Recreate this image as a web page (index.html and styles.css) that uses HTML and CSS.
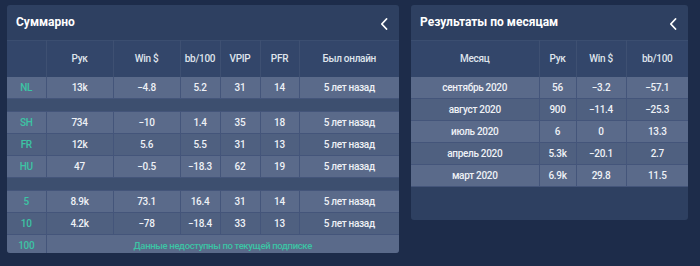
FILE: index.html
```html
<!DOCTYPE html>
<html lang="ru">
<head>
<meta charset="utf-8">
<link rel="stylesheet" href="styles.css">
</head>
<body>
<div class="page">
  <section class="panel panel-left">
    <header class="panel-head">
      <h2 class="panel-title">Суммарно</h2>
      <svg class="chev" viewBox="0 0 8 12" width="8" height="12"><path d="M6.5 1 L1.8 6 L6.5 11" fill="none" stroke="#fff" stroke-width="1.8" stroke-linecap="round" stroke-linejoin="round"/></svg>
    </header>
    <table class="grid">
      <colgroup><col style="width:39px"><col style="width:67px"><col style="width:67px"><col style="width:40px"><col style="width:40px"><col style="width:39px"><col style="width:100px"></colgroup>
      <thead>
        <tr><th></th><th>Рук</th><th>Win $</th><th>bb/100</th><th>VPIP</th><th>PFR</th><th>Был онлайн</th></tr>
      </thead>
      <tbody>
        <tr class="lt"><td class="lbl">NL</td><td>13k</td><td>−4.8</td><td>5.2</td><td>31</td><td>14</td><td>5 лет назад</td></tr>
        <tr class="gap"><td colspan="7"></td></tr>
        <tr class="lt"><td class="lbl">SH</td><td>734</td><td>−10</td><td>1.4</td><td>35</td><td>18</td><td>5 лет назад</td></tr>
        <tr class="dk"><td class="lbl">FR</td><td>12k</td><td>5.6</td><td>5.5</td><td>31</td><td>13</td><td>5 лет назад</td></tr>
        <tr class="lt"><td class="lbl">HU</td><td>47</td><td>−0.5</td><td>−18.3</td><td>62</td><td>19</td><td>5 лет назад</td></tr>
        <tr class="gap"><td colspan="7"></td></tr>
        <tr class="lt"><td class="lbl">5</td><td>8.9k</td><td>73.1</td><td>16.4</td><td>31</td><td>14</td><td>5 лет назад</td></tr>
        <tr class="dk"><td class="lbl">10</td><td>4.2k</td><td>−78</td><td>−18.4</td><td>33</td><td>13</td><td>5 лет назад</td></tr>
        <tr class="lt"><td class="lbl">100</td><td colspan="6" class="note">Данные недоступны по текущей подписке</td></tr>
      </tbody>
    </table>
  </section>
  <section class="panel panel-right">
    <header class="panel-head">
      <h2 class="panel-title">Результаты по месяцам</h2>
      <svg class="chev" viewBox="0 0 8 12" width="8" height="12"><path d="M6.5 1 L1.8 6 L6.5 11" fill="none" stroke="#fff" stroke-width="1.8" stroke-linecap="round" stroke-linejoin="round"/></svg>
    </header>
    <table class="grid">
      <colgroup><col style="width:128px"><col style="width:37px"><col style="width:50px"><col style="width:62px"></colgroup>
      <thead>
        <tr><th>Месяц</th><th>Рук</th><th>Win $</th><th>bb/100</th></tr>
      </thead>
      <tbody>
        <tr class="lt"><td>сентябрь 2020</td><td>56</td><td>−3.2</td><td>−57.1</td></tr>
        <tr class="dk"><td>август 2020</td><td>900</td><td>−11.4</td><td>−25.3</td></tr>
        <tr class="lt"><td>июль 2020</td><td>6</td><td>0</td><td>13.3</td></tr>
        <tr class="dk"><td>апрель 2020</td><td>5.3k</td><td>−20.1</td><td>2.7</td></tr>
        <tr class="lt"><td>март 2020</td><td>6.9k</td><td>29.8</td><td>11.5</td></tr>
      </tbody>
    </table>
  </section>
</div>
</body>
</html>
```
FILE: styles.css
```css
html, body {
  margin: 0;
  padding: 0;
  background: #1d2c4a;
  width: 700px;
  height: 266px;
  overflow: hidden;
  font-family: Roboto, "Noto Sans", sans-serif;
}
.page {
  display: flex;
  align-items: flex-start;
  gap: 12px;
  padding: 5px 0 0 7px;
}
.panel {
  background: #2e4061;
  border-radius: 3px;
  overflow: hidden;
}
.panel-left { width: 392px; height: 248px; }
.panel-right { width: 277px; height: 215px; }
.panel-head {
  height: 35px;
  display: flex;
  align-items: center;
  justify-content: space-between;
  padding: 0 11px 1px 9px;
  box-sizing: border-box;
}
.panel-title {
  margin: 0;
  font-size: 12px;
  font-weight: 700;
  color: #ffffff;
}
.chev { display: block; margin-top: 3px; }
.grid {
  border-collapse: collapse;
  table-layout: fixed;
  width: 100%;
  font-size: 10px;
  font-weight: 500;
  letter-spacing: -0.3px;
  color: #eef1f6;
}
.grid thead tr {
  background: #33466a;
  height: 36px;
  border-top: 1px solid #3b4e70;
}
.grid th {
  font-weight: 500;
  color: #dfe4ec;
  text-align: center;
  border-left: 1px solid #3e5072;
  padding: 0;
}
.grid th:first-child { border-left: none; }
.grid td {
  text-align: center;
  padding: 0;
  height: 21px;
  border-left: 1px solid #44557a;
  border-bottom: 1px solid #44557a;
  white-space: nowrap;
}
.grid td:first-child { border-left: none; }
.grid tr.lt { background: #5a6a8a; }
.grid tr.dk { background: #4f6080; }
.grid tr.gap td {
  height: 12px;
  background: #3d4f6f;
  border-left: none;
}
.grid td.lbl { color: #3cc4a4; }
.grid td.note { color: #3cc4a4; font-size: 9.5px; letter-spacing: -0.35px; }
```
